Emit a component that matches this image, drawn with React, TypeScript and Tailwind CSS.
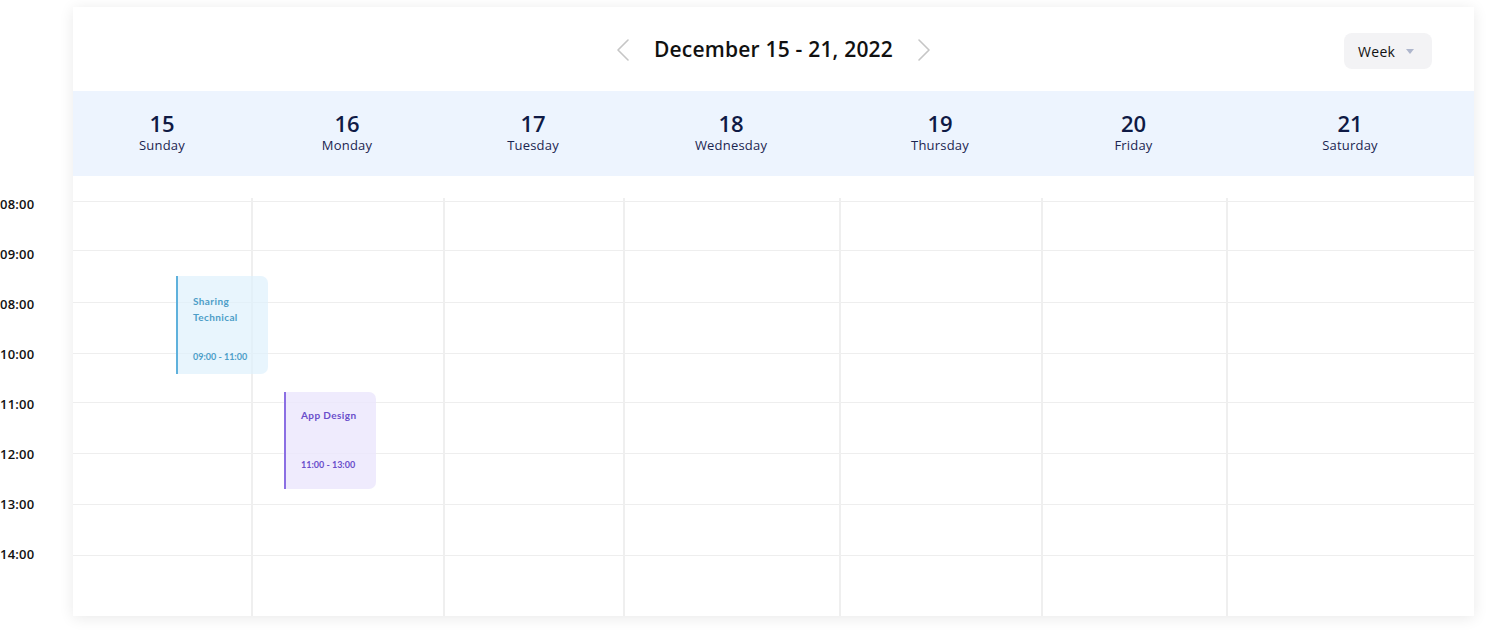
import React from "react";

const days = [
  { n: "15", d: "Sunday", w: "w-[178px]" },
  { n: "16", d: "Monday", w: "w-[192px]" },
  { n: "17", d: "Tuesday", w: "w-[180px]" },
  { n: "18", d: "Wednesday", w: "w-[216px]" },
  { n: "19", d: "Thursday", w: "w-[202px]" },
  { n: "20", d: "Friday", w: "w-[185px]" },
  { n: "21", d: "Saturday", w: "w-[248px]" },
];

const times = ["08:00", "09:00", "08:00", "10:00", "11:00", "12:00", "13:00", "14:00"];
const rowH = ["h-[49px]", "h-[52px]", "h-[51px]", "h-[49px]", "h-[51px]", "h-[51px]", "h-[51px]"];

function Chevron({ dir }: { dir: "left" | "right" }) {
  return (
    <svg width="14" height="22" viewBox="0 0 14 22" fill="none">
      <path
        d={dir === "left" ? "M12 1 L2 11 L12 21" : "M2 1 L12 11 L2 21"}
        stroke="#c6c6c6"
        strokeWidth="1.6"
        strokeLinecap="round"
        strokeLinejoin="round"
      />
    </svg>
  );
}

export default function App() {
  return (
    <div className="w-[1486px] h-[633px] bg-white flex font-['Open_Sans',sans-serif] overflow-hidden">
      {/* time labels */}
      <div className="w-[73px] shrink-0 pt-[194px] flex flex-col">
        {times.map((t, i) => (
          <div key={i} className="h-[50px] leading-[20px] text-[13px] font-semibold text-[#111] tracking-[0.2px]">
            {t}
          </div>
        ))}
      </div>

      {/* card */}
      <div className="mt-[7px] w-[1401px] h-[609px] bg-white shadow-[0_2px_14px_rgba(0,0,0,0.09)] flex flex-col">
        {/* header */}
        <div className="h-[84px] grid grid-cols-[1fr_auto_1fr] items-center">
          <div />
          <div className="flex items-center pt-[1px]">
            <Chevron dir="left" />
            <div className="mx-[24px] text-[21px] font-semibold text-[#111] tracking-[0.2px]">
              December 15 - 21, 2022
            </div>
            <Chevron dir="right" />
          </div>
          <div className="flex justify-end pr-[42px] pt-[4px]">
            <div className="w-[88px] h-[36px] rounded-[8px] bg-[#f3f3f5] flex items-center pl-[14px] gap-[11px]">
              <span className="text-[14px] font-medium text-[#111] tracking-[0.3px]">Week</span>
              <svg width="8" height="5" viewBox="0 0 8 5">
                <path d="M0 0 H8 L4 5 Z" fill="#aeb6cc" />
              </svg>
            </div>
          </div>
        </div>

        {/* days band */}
        <div className="h-[85px] bg-[#edf4fe] flex">
          {days.map((d) => (
            <div key={d.n} className={`${d.w} flex flex-col items-center pt-[18px]`}>
              <div className="text-[22px] leading-[28px] font-semibold text-[#0f1a45]">{d.n}</div>
              <div className="text-[13px] leading-[16px] font-medium text-[#1b2550] tracking-[0.2px]">{d.d}</div>
            </div>
          ))}
        </div>

        {/* grid */}
        <div className="flex-1 flex pt-[22px]">
          {days.map((d, ci) => (
            <div
              key={d.n}
              className={`${d.w} relative flex flex-col ${ci > 0 ? "border-l-2 border-[#efefef]" : ""}`}
            >
              <div className="h-[3px]" />
              {rowH.map((h, ri) => (
                <div key={ri} className={`${h} border-t border-[#eeeeee]`} />
              ))}
              <div className="flex-1 border-t border-[#eeeeee]" />

              {ci === 0 && (
                <div className="absolute z-10 left-[103px] top-[78px] w-[92px] h-[98px] rounded-r-[7px] bg-[#def1fc]/70 border-l-2 border-[#5fb1dc] pl-[15px] pt-[17px] flex flex-col text-[#4d9ec8] font-['Lato',sans-serif] font-bold text-[10px] tracking-[0.4px]">
                  <div className="leading-[16px]">Sharing</div>
                  <div className="leading-[16px]">Technical</div>
                  <div className="leading-[16px] mt-[24px] text-[9px] tracking-[0px]">09:00 - 11:00</div>
                </div>
              )}
              {ci === 1 && (
                <div className="absolute z-10 left-[31px] top-[194px] w-[92px] h-[97px] rounded-r-[7px] bg-[#ebe6fd]/80 border-l-2 border-[#8b6fe3] pl-[15px] pt-[15px] flex flex-col text-[#6a4ecb] font-['Lato',sans-serif] font-bold text-[10px]">
                  <div className="leading-[16px] tracking-[0.4px]">App Design</div>
                  <div className="leading-[16px] mt-[34px] text-[9px] tracking-[0px]">11:00 - 13:00</div>
                </div>
              )}
            </div>
          ))}
        </div>
      </div>
    </div>
  );
}
